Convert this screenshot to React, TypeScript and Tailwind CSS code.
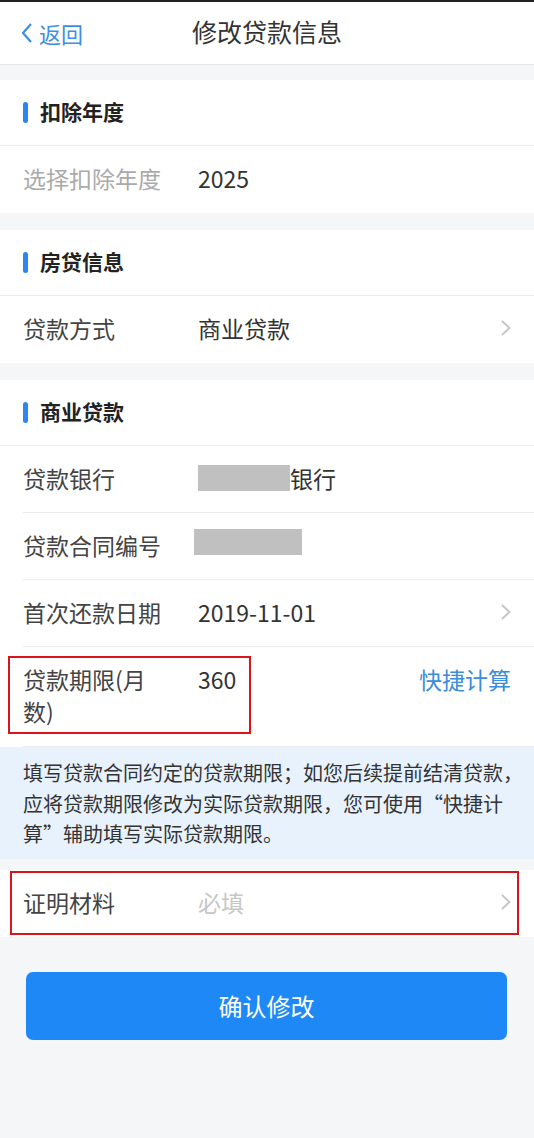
const font = { fontFamily: '"Noto Sans CJK SC", "Noto Sans", sans-serif' };

function Chevron() {
  return (
    <svg width="12" height="18" viewBox="0 0 12 18" className="shrink-0">
      <path d="M2 2 L9.5 9 L2 16" fill="none" stroke="#c4c4c4" strokeWidth="1.8" />
    </svg>
  );
}

function SectionTitle({ text }: { text: string }) {
  return (
    <div className="flex h-[66px] items-center border-b border-[#ebebeb] pl-[23px]">
      <span className="h-[21px] w-[5px] rounded-full bg-[#2b86f0]" />
      <span className="ml-[12px] -mt-[1px] text-[21px] font-bold text-[#222]">{text}</span>
    </div>
  );
}

function Row({
  label,
  children,
  chevron,
  divider = true,
  labelClass = "text-[#444]",
}: {
  label: string;
  children?: React.ReactNode;
  chevron?: boolean;
  divider?: boolean;
  labelClass?: string;
}) {
  return (
    <div className="pl-[23px]">
      <div
        className={`flex items-start border-b pr-[22px] pt-[16px] pb-[18px] ${
          divider ? "border-[#ededed]" : "border-transparent"
        }`}
      >
        <div className={`w-[140px] shrink-0 text-[23px] leading-[32px] ${labelClass}`}>{label}</div>
        <div className="ml-[35px] flex flex-1 items-center text-[23px] leading-[32px] text-[#333]">{children}</div>
        {chevron && (
          <div className="flex h-[32px] items-center">
            <Chevron />
          </div>
        )}
      </div>
    </div>
  );
}

export default function App() {
  return (
    <div className="min-h-[1138px] bg-[#f5f6f8]" style={font}>
      <div className="h-[2px] bg-[#222]" />
      <div className="relative flex h-[63px] items-center justify-center border-b border-[#e6e6e6] bg-white">
        <div className="absolute left-[20px] top-0 flex h-full items-center text-[22px] text-[#3d8fe0]">
          <svg width="14" height="22" viewBox="0 0 14 22" className="mr-[5px]">
            <path d="M11 2 L3 11 L11 20" fill="none" stroke="#3d8fe0" strokeWidth="2.2" />
          </svg>
          返回
        </div>
        <div className="-mt-[2px] text-[25px] text-[#333]">修改贷款信息</div>
      </div>

      <div className="mt-[15px] bg-white">
        <SectionTitle text="扣除年度" />
        <Row label="选择扣除年度" divider={false} labelClass="text-[#aaaaaa]">
          2025
        </Row>
      </div>

      <div className="mt-[17px] bg-white">
        <SectionTitle text="房贷信息" />
        <Row label="贷款方式" divider={false} chevron>
          商业贷款
        </Row>
      </div>

      <div className="mt-[17px] bg-white">
        <SectionTitle text="商业贷款" />
        <Row label="贷款银行">
          <span className="h-[26px] w-[92px] bg-[#c0c0c0]" />
          <span>银行</span>
        </Row>
        <Row label="贷款合同编号">
          <span className="-ml-[4px] h-[26px] w-[108px] bg-[#c0c0c0]" />
        </Row>
        <Row label="首次还款日期" chevron>
          2019-11-01
        </Row>
        <div className="pl-[23px]">
          <div className="relative flex items-start border-b border-[#ededed] pr-[23px] pt-[16px] pb-[19px]">
            <div className="w-[140px] shrink-0 text-[23px] leading-[32px] text-[#444]">贷款期限(月数)</div>
            <div className="ml-[35px] flex-1 text-[23px] leading-[32px] text-[#333]">360</div>
            <div className="text-[23px] leading-[32px] text-[#3a8ddb]">快捷计算</div>
            <div className="absolute left-[-15px] top-[9px] h-[78px] w-[243px] border-2 border-[#d9141b]" />
          </div>
        </div>
        <div className="bg-[#e8f2fd] pl-[23px] pr-[8px] pt-[11px] pb-[9px] text-[20px] leading-[30.5px] text-[#333]">
          填写贷款合同约定的贷款期限；如您后续提前结清贷款，应将贷款期限修改为实际贷款期限，您可使用“快捷计算”辅助填写实际贷款期限。
        </div>
      </div>

      <div className="relative mt-[11px] bg-white">
        <Row label="证明材料" divider={false} chevron>
          <span className="text-[#c6c6c6]">必填</span>
        </Row>
        <div className="absolute left-[10px] right-[15px] top-[1px] bottom-[2px] border-2 border-[#d9141b]" />
      </div>

      <div className="px-[26px] pt-[35px]">
        <div className="flex h-[68px] w-[481px] items-center justify-center rounded-[7px] bg-[#1e89f6] text-[24px] text-white">
          确认修改
        </div>
      </div>
    </div>
  );
}
